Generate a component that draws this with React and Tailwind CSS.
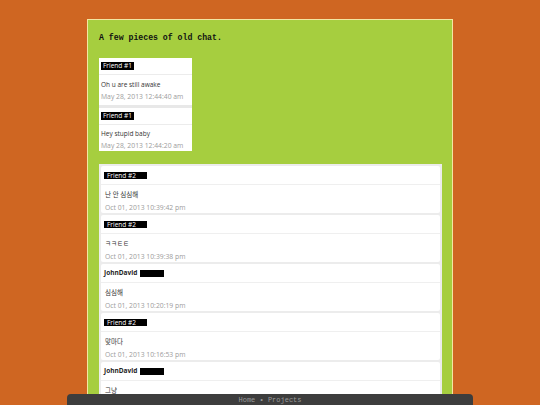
import React from 'react';

const SANS = { fontFamily: '"Open Sans", "Noto Sans CJK KR", sans-serif' };

const oldChat = [
  { who: 'Friend #2', msg: '난 안 심심해', at: 'Oct 01, 2013 10:39:42 pm' },
  { who: 'Friend #2', msg: 'ㅋㅋㅌㅌ', at: 'Oct 01, 2013 10:39:38 pm' },
  { who: 'JohnDavid', mine: true, msg: '심심해', at: 'Oct 01, 2013 10:20:19 pm' },
  { who: 'Friend #2', msg: '맞마다', at: 'Oct 01, 2013 10:16:53 pm' },
  { who: 'JohnDavid', mine: true, msg: '그냥', at: 'Oct 01, 2013 10:12:07 pm' },
];

// small two-message box at the top
const SmallCard = ({ msg, at, last }) => (
  <div className="bg-white">
    <div className="flex h-[17px] items-center border-b border-[#ececec] px-[2px]">
      <span className="bg-black px-[2px] text-[6.5px] leading-[8px] text-white">Friend #1</span>
    </div>
    <div className={last ? 'px-[2px] pt-[4px]' : 'px-[2px] pt-[5px] pb-[3px]'}>
      <div className="text-[6.5px] leading-[10px] text-[#333]">{msg}</div>
      <div className="mt-[2px] text-[6.8px] leading-[10px] text-[#9c9c9c]">{at}</div>
    </div>
  </div>
);

const ChatCard = ({ who, mine, msg, at }) => (
  <div className="h-[47px] rounded-[2px] bg-white">
    <div className="flex h-[19px] items-center border-b border-[#efefef] px-[3px]">
      {mine ? (
        <>
          <span className="text-[6.5px] font-bold leading-[8px] text-[#222]">{who}</span>
          <span className="ml-[3px] inline-block h-[7px] w-[24px] bg-black" />
        </>
      ) : (
        <span className="inline-block w-[43px] bg-black px-[3px] text-[6.5px] leading-[7px] text-white">{who}</span>
      )}
    </div>
    <div className="px-[4px] pt-[5px]">
      <div className="text-[6.5px] leading-[10px] text-[#333]">{msg}</div>
      <div className="mt-[3px] text-[6.8px] leading-[10px] text-[#9c9c9c]">{at}</div>
    </div>
  </div>
);

export default function App() {
  return (
    <div className="relative h-[405px] w-[540px] overflow-hidden bg-[#cf6622]" style={SANS}>
      <div className="ml-[87px] mt-[19px] h-[420px] w-[366px] border border-[#f3e7a2] bg-[#a6ce3f] pl-[11px] pt-[13px]">
        <h1
          className="text-[8.2px] font-bold leading-[10px] text-[#111]"
          style={{ fontFamily: '"Liberation Mono", monospace' }}
        >
          A few pieces of old chat.
        </h1>

        <div className="mt-[15px] flex w-[93px] flex-col gap-[3px] bg-[#e8e8e8]">
          <SmallCard msg="Oh u are still awake" at="May 28, 2013 12:44:40 am" />
          <SmallCard msg="Hey stupid baby" at="May 28, 2013 12:44:20 am" last />
        </div>

        <div className="mt-[13px] flex w-[343px] flex-col gap-[2px] bg-[#ececec] p-[2px]">
          {oldChat.map((c, i) => (
            <ChatCard key={i} {...c} />
          ))}
        </div>
      </div>

      <div className="fixed bottom-0 left-[67px] flex h-[11px] w-[406px] items-center justify-center rounded-t-[4px] bg-[#3d3d3d]">
        <span
          className="text-[7px] leading-[8px] text-[#9a9a9a]"
          style={{ fontFamily: '"Liberation Mono", monospace' }}
        >
          Home • Projects
        </span>
      </div>
    </div>
  );
}
